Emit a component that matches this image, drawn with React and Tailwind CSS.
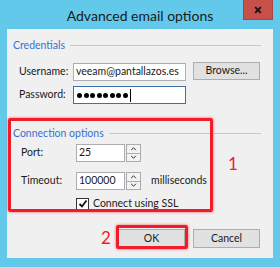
import { useState } from "react"

function Spinner() {
    return (
        <div className="flex flex-col w-[15px] h-[18px] ml-[1px]">
            <div className="flex-1 flex items-center justify-center bg-[#f3f3f3] border border-[#acacac]">
                <svg viewBox="0 0 8 5" className="w-[7px] h-[4px]"><path d="M1 4L4 1L7 4" fill="none" stroke="#222" strokeWidth="1.2"/></svg>
            </div>
            <div className="flex-1 flex items-center justify-center bg-[#f3f3f3] border border-t-0 border-[#acacac]">
                <svg viewBox="0 0 8 5" className="w-[7px] h-[4px]"><path d="M1 1L4 4L7 1" fill="none" stroke="#222" strokeWidth="1.2"/></svg>
            </div>
        </div>
    )
}

function GroupHeader({title}) {
    return (
        <div className="flex items-center h-[14px] pl-[6px] pr-[12px]">
            <span className="text-[#3a6fd0] leading-[14px]">{title}</span>
            <div className="flex-1 h-px bg-[#c8c8c8] ml-[5px] mt-[1px]"></div>
        </div>
    )
}

function App() {
    const [ssl, setSsl] = useState(true)
    return (
        <div className="relative w-[280px] h-[267px] bg-[#63c9ea] flex flex-col text-[10.5px] text-[#1a1a1a] whitespace-nowrap" style={{fontFamily: 'Lato, "Liberation Sans", sans-serif'}}>
            <div className="relative h-[29px] flex items-center justify-center">
                <span className="text-[14px] text-[#1a1a1a] mt-[1px]">Advanced email options</span>
                <div className="absolute top-0 right-[7px] w-[30px] h-[20px] bg-[#c7504b] border border-[#a94440] border-t-0 flex items-center justify-center">
                    <svg viewBox="0 0 10 10" className="w-[8px] h-[8px]"><path d="M1.5 1.5L8.5 8.5M8.5 1.5L1.5 8.5" stroke="#111" strokeWidth="2.2"/></svg>
                </div>
            </div>
            <div className="mx-[7px] h-[229px] bg-[#f0f0f0] flex flex-col pt-[9px]">
                <GroupHeader title="Credentials" />
                <div className="flex items-center mt-[11px] h-[18px]">
                    <span className="w-[66px] pl-[12px]">Username:</span>
                    <div className="w-[113px] h-[18px] bg-white border border-[#abadb3] flex items-center pl-[2px] overflow-hidden">veeam@pantallazos.es</div>
                    <button className="ml-[7px] w-[67px] h-[18px] -mt-[3px] bg-[#e1e1e1] border border-[#adadad] flex items-center justify-center">Browse...</button>
                </div>
                <div className="flex items-center mt-[5px] h-[18px]">
                    <span className="w-[66px] pl-[12px]">Password:</span>
                    <div className="w-[113px] h-[18px] bg-white border border-[#3e6fa6] flex items-center pl-[3px] gap-[1.5px]">
                        {[0,1,2,3,4,5,6,7].map(i => <span key={i} className="w-[5px] h-[5px] rounded-full bg-black"></span>)}
                        <span className="w-px h-[13px] bg-black ml-[1px]"></span>
                    </div>
                </div>
                <div className="mt-[22px]">
                    <GroupHeader title="Connection options" />
                </div>
                <div className="flex items-center mt-[4px] h-[18px]">
                    <span className="w-[69px] pl-[14px]">Port:</span>
                    <div className="w-[49px] h-[18px] bg-white border border-[#abadb3] flex items-center pl-[2px]">25</div>
                    <Spinner />
                </div>
                <div className="flex items-center mt-[10px] h-[18px]">
                    <span className="w-[69px] pl-[14px]">Timeout:</span>
                    <div className="w-[49px] h-[18px] bg-white border border-[#abadb3] flex items-center pl-[2px]">100000</div>
                    <Spinner />
                    <span className="ml-[10px]">milliseconds</span>
                </div>
                <div className="flex items-center mt-[7px] h-[14px] pl-[69px]">
                    <div onClick={() => setSsl(!ssl)} className="w-[13px] h-[13px] bg-white border border-[#333] flex items-center justify-center">
                        {ssl && <svg viewBox="0 0 10 10" className="w-[10px] h-[10px]"><path d="M1.5 5L4 7.5L8.5 1.5" fill="none" stroke="#111" strokeWidth="1.8"/></svg>}
                    </div>
                    <span className="ml-[4px]">Connect using SSL</span>
                </div>
                <div className="flex mt-[18px] pl-[111px] gap-[8px]">
                    <button className="w-[67px] h-[19px] bg-[#e1e1e1] border border-[#adadad] flex items-center justify-center">OK</button>
                    <button className="w-[67px] h-[19px] bg-[#e1e1e1] border border-[#adadad] flex items-center justify-center">Cancel</button>
                </div>
            </div>
            <div className="absolute left-[8px] top-[118px] w-[205px] h-[94px] border-[3px] border-[#f01c2c] rounded-[2px] shadow-[0_0_3px_#ff5060]"></div>
            <div className="absolute left-[116px] top-[225px] w-[72px] h-[24px] border-[3px] border-[#f01c2c] rounded-[2px] shadow-[0_0_3px_#ff5060]"></div>
            <span className="absolute left-[228px] top-[154px] text-[17px] text-[#f01c2c] leading-[20px]">1</span>
            <span className="absolute left-[101px] top-[228px] text-[17px] text-[#f01c2c] leading-[20px]">2</span>
        </div>
    )
}

export default App
